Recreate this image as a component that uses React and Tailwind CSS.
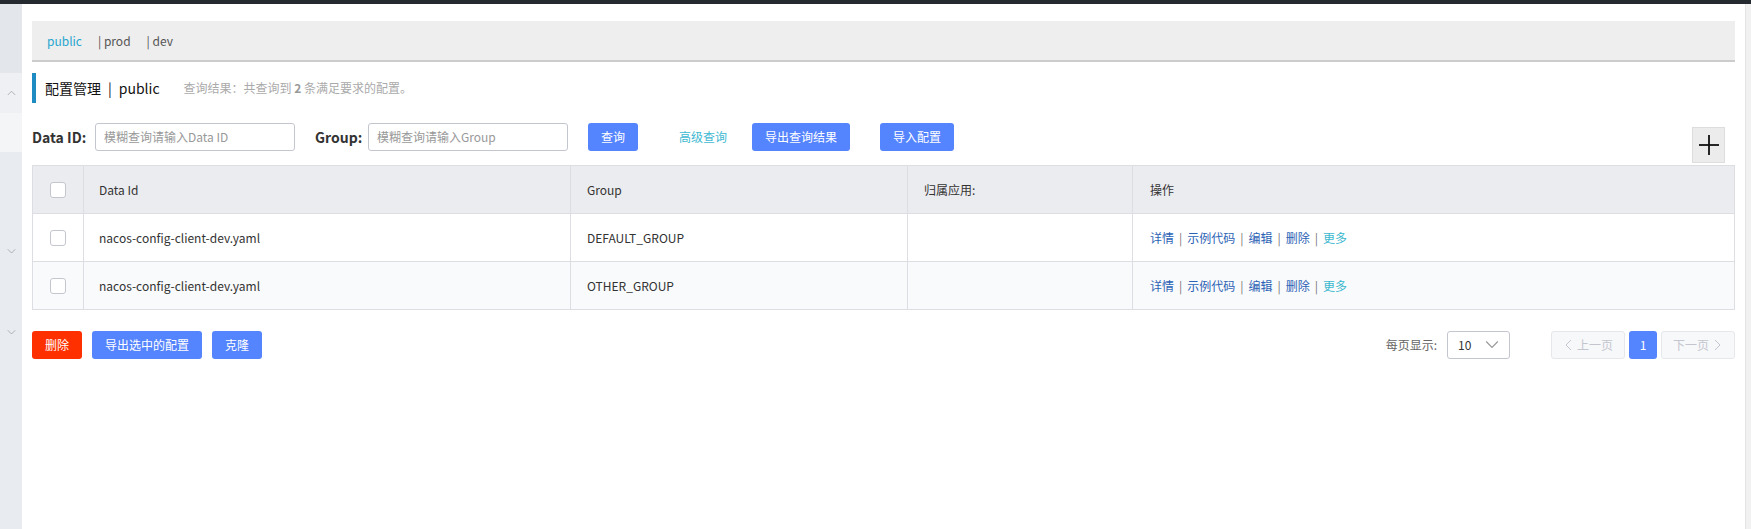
const FONT = { fontFamily: '"Noto Sans CJK SC", "Noto Sans", sans-serif' };

function Chevron({ dir = 'down', className = '' }) {
  const pts = {
    down: '1,3 6,8 11,3',
    up: '1,8 6,3 11,8',
    left: '8,1 3,6 8,11',
    right: '4,1 9,6 4,11',
  }[dir];
  return (
    <svg viewBox="0 0 12 12" className={className} fill="none" stroke="currentColor" strokeWidth="1">
      <polyline points={pts} />
    </svg>
  );
}

function Checkbox() {
  return <span className="block w-[16px] h-[16px] rounded-[3px] border border-[#c4c6cf] bg-white" />;
}

const rows = [
  { id: 'nacos-config-client-dev.yaml', group: 'DEFAULT_GROUP' },
  { id: 'nacos-config-client-dev.yaml', group: 'OTHER_GROUP' },
];

function Actions() {
  return (
    <div className="flex items-center text-[12px] text-[#2c63b5]">
      <span>详情</span>
      <span className="mx-[5px] text-[#777]">|</span>
      <span>示例代码</span>
      <span className="mx-[5px] text-[#777]">|</span>
      <span>编辑</span>
      <span className="mx-[5px] text-[#777]">|</span>
      <span>删除</span>
      <span className="mx-[5px] text-[#777]">|</span>
      <span className="text-[#3cb8cf]">更多</span>
    </div>
  );
}

export default function App() {
  return (
    <div className="w-[1751px] h-[529px] overflow-hidden flex flex-col bg-white text-[#333]" style={FONT}>
      <div className="h-[4px] bg-[#252a31]" />
      <div className="flex flex-1 min-h-0">
        {/* side nav, collapsed */}
        <aside className="w-[22px] flex flex-col bg-[#e8ebef] text-[#9aa0a8]">
          <div className="h-[69px] bg-[#e3e6ea]" />
          <div className="h-[40px] bg-[#eef0f3] flex items-center justify-center">
            <Chevron dir="up" className="w-[9px] h-[9px]" />
          </div>
          <div className="h-[39px] bg-[#f4f5f7]" />
          <div className="mt-[95px] flex justify-center">
            <Chevron dir="down" className="w-[9px] h-[9px]" />
          </div>
          <div className="mt-[72px] flex justify-center">
            <Chevron dir="down" className="w-[9px] h-[9px]" />
          </div>
        </aside>

        <main className="flex-1 min-w-0 px-[10px] pt-[17px]">
          {/* namespaces */}
          <div className="h-[41px] bg-[#eeeeee] border-b-2 border-[#cccccc] flex items-center pl-[15px] text-[12px]">
            <span className="text-[#27a6cf] mr-[16px]">public</span>
            <span className="text-[#555] mr-[16px]">|&nbsp;prod</span>
            <span className="text-[#555]">|&nbsp;dev</span>
          </div>

          {/* title */}
          <div className="mt-[11px] flex items-center h-[30px] text-[14px] text-[#111]">
            <span className="w-[4px] h-[30px] bg-[#1e8bc3]" />
            <span className="ml-[9px]">配置管理</span>
            <span className="ml-[7px]">|</span>
            <span className="ml-[7px]">public</span>
            <span className="ml-[24px] text-[12px] text-[#aaa]">
              查询结果：共查询到 <b className="font-bold text-[#999]">2</b> 条满足要求的配置。
            </span>
          </div>

          {/* search */}
          <div className="mt-[20px] flex items-start h-[40px]">
            <label className="w-[63px] h-[28px] flex items-center text-[14px] font-bold text-[#333]">Data ID:</label>
            <div className="w-[200px] h-[28px] border border-[#c4c6cf] rounded-[3px] flex items-center px-[8px] text-[12px] text-[#999]">
              模糊查询请输入Data ID
            </div>
            <label className="ml-[20px] w-[53px] h-[28px] flex items-center text-[14px] font-bold text-[#333]">Group:</label>
            <div className="w-[200px] h-[28px] border border-[#c4c6cf] rounded-[3px] flex items-center px-[8px] text-[12px] text-[#999]">
              模糊查询请输入Group
            </div>
            <button className="ml-[20px] w-[50px] h-[28px] rounded-[3px] bg-[#5584ff] text-white text-[12px]">查询</button>
            <span className="ml-[41px] h-[28px] flex items-center text-[12px] text-[#3fb9d1]">高级查询</span>
            <button className="ml-[25px] w-[98px] h-[28px] rounded-[3px] bg-[#5584ff] text-white text-[12px]">导出查询结果</button>
            <button className="ml-[30px] w-[74px] h-[28px] rounded-[3px] bg-[#5584ff] text-white text-[12px]">导入配置</button>
            <button className="ml-auto mr-[10px] mt-[4px] w-[33px] h-[36px] bg-[#ececec] border border-[#dddddd] flex items-center justify-center">
              <svg viewBox="0 0 22 22" className="w-[22px] h-[22px]" stroke="#111" strokeWidth="1.8">
                <line x1="11" y1="1" x2="11" y2="21" />
                <line x1="1" y1="11" x2="21" y2="11" />
              </svg>
            </button>
          </div>

          {/* table */}
          <div className="mt-[2px] border border-[#dcdee3]">
            <div className="grid grid-cols-[51px_487px_337px_225px_1fr] h-[47px] bg-[#ebecf0] text-[12px] text-[#333]">
              <div className="flex items-center justify-center border-r border-[#dcdee3]"><Checkbox /></div>
              <div className="flex items-center pl-[15px] border-r border-[#dcdee3]">Data Id</div>
              <div className="flex items-center pl-[16px] border-r border-[#dcdee3]">Group</div>
              <div className="flex items-center pl-[16px] border-r border-[#dcdee3]">归属应用:</div>
              <div className="flex items-center pl-[17px]">操作</div>
            </div>
            {rows.map((r, i) => (
              <div
                key={r.group}
                className={`grid grid-cols-[51px_487px_337px_225px_1fr] h-[48px] border-t border-[#dcdee3] text-[12px] text-[#333] ${
                  i % 2 ? 'bg-[#f9fafb]' : 'bg-white'
                }`}
              >
                <div className="flex items-center justify-center border-r border-[#dcdee3]"><Checkbox /></div>
                <div className="flex items-center pl-[15px] border-r border-[#dcdee3]">{r.id}</div>
                <div className="flex items-center pl-[16px] border-r border-[#dcdee3]">{r.group}</div>
                <div className="border-r border-[#dcdee3]" />
                <div className="flex items-center pl-[17px]"><Actions /></div>
              </div>
            ))}
          </div>

          {/* footer */}
          <div className="mt-[21px] flex items-center h-[28px]">
            <button className="w-[50px] h-[28px] rounded-[3px] bg-[#ff3000] text-white text-[12px]">删除</button>
            <button className="ml-[10px] w-[110px] h-[28px] rounded-[3px] bg-[#5584ff] text-white text-[12px]">导出选中的配置</button>
            <button className="ml-[10px] w-[50px] h-[28px] rounded-[3px] bg-[#5584ff] text-white text-[12px]">克隆</button>

            <div className="ml-auto flex items-center">
              <span className="text-[12px] text-[#666]">每页显示:</span>
              <div className="ml-[10px] w-[63px] h-[28px] border border-[#c4c6cf] rounded-[3px] flex items-center pl-[10px] pr-[10px] text-[12px] text-[#333]">
                <span>10</span>
                <Chevron dir="down" className="ml-auto w-[14px] h-[14px] text-[#999]" />
              </div>
              <button className="ml-[41px] w-[74px] h-[28px] rounded-[3px] bg-[#f7f8fa] border border-[#e6e7eb] flex items-center justify-center text-[12px] text-[#c4c6cf]">
                <Chevron dir="left" className="w-[12px] h-[12px] mr-[2px]" />上一页
              </button>
              <button className="ml-[4px] w-[28px] h-[28px] rounded-[3px] bg-[#5584ff] text-white text-[12px]">1</button>
              <button className="ml-[4px] w-[74px] h-[28px] rounded-[3px] bg-[#f7f8fa] border border-[#e6e7eb] flex items-center justify-center text-[12px] text-[#c4c6cf]">
                下一页<Chevron dir="right" className="w-[12px] h-[12px] ml-[2px]" />
              </button>
            </div>
          </div>
        </main>

        {/* page scrollbar */}
        <div className="w-[6px] bg-[#f1f1f1] border-l border-[#e4e4e4]" />
      </div>
    </div>
  );
}
